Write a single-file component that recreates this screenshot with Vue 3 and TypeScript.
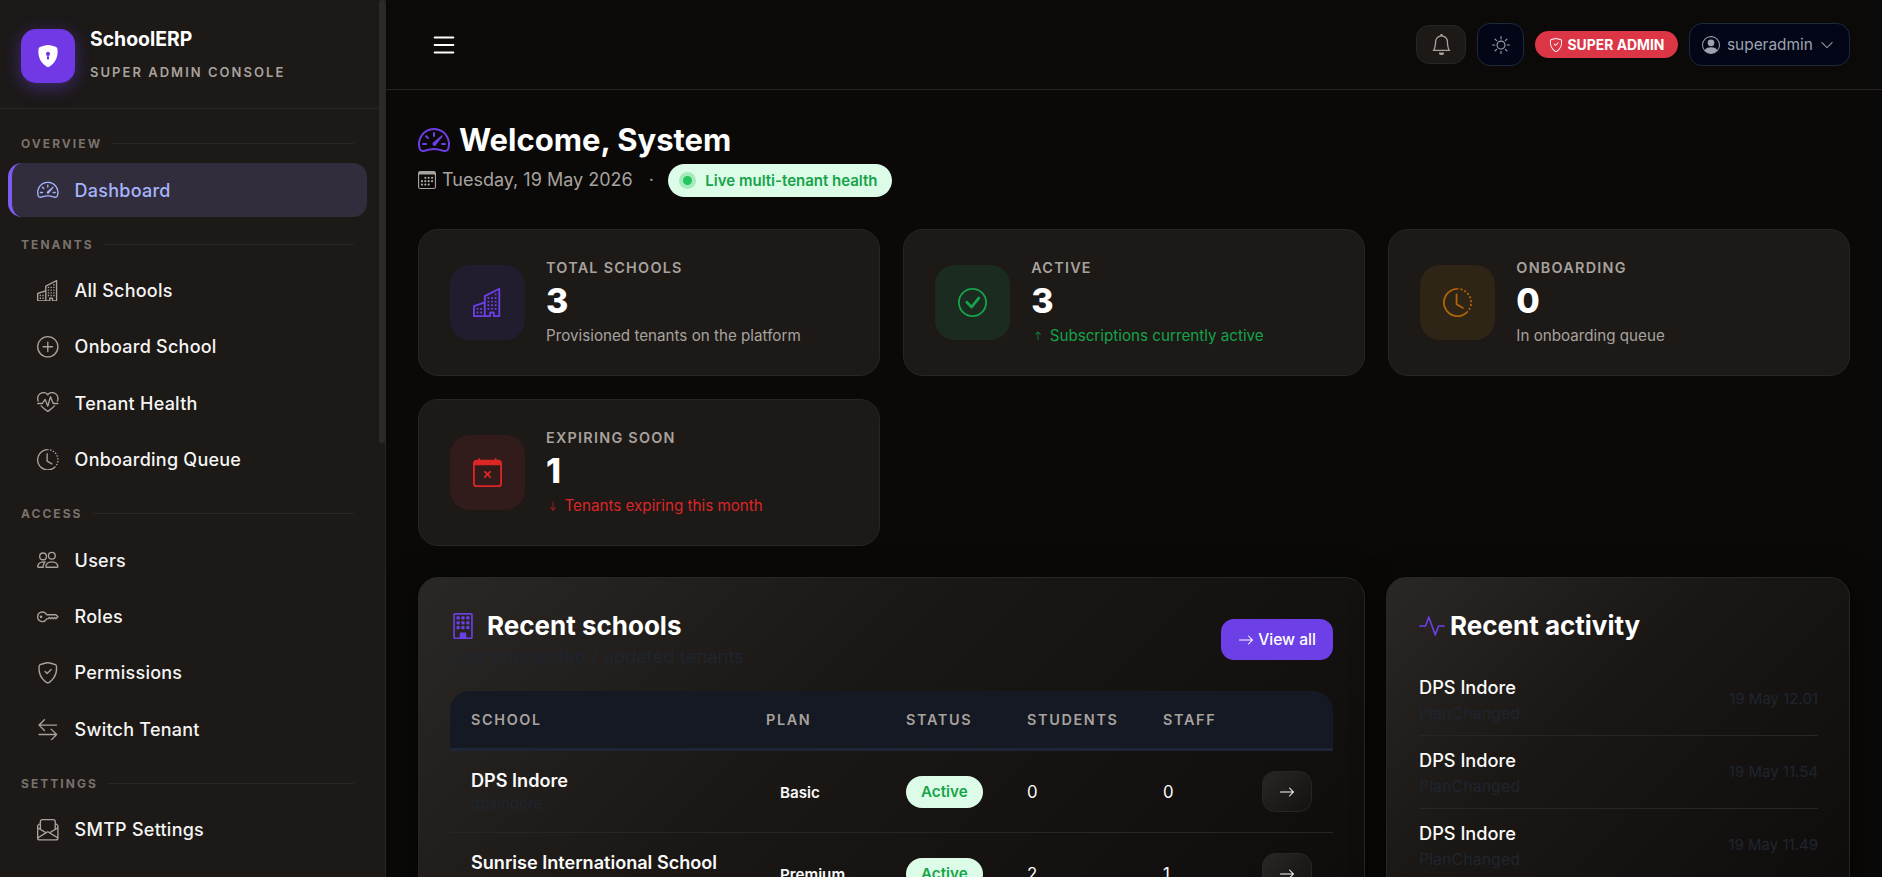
<script setup lang="ts">
import { h } from 'vue'

const icons: Record<string, string[]> = {
  speedometer: [
    'M8 4a.5.5 0 0 1 .5.5V6a.5.5 0 0 1-1 0V4.5A.5.5 0 0 1 8 4M3.732 5.732a.5.5 0 0 1 .707 0l.915.914a.5.5 0 1 1-.708.708l-.914-.915a.5.5 0 0 1 0-.707M2 10a.5.5 0 0 1 .5-.5h1.586a.5.5 0 0 1 0 1H2.5A.5.5 0 0 1 2 10m9.5 0a.5.5 0 0 1 .5-.5h1.5a.5.5 0 0 1 0 1H12a.5.5 0 0 1-.5-.5m.754-4.246a.39.39 0 0 0-.527-.02L7.547 9.31a.91.91 0 1 0 1.302 1.258l3.434-4.297a.39.39 0 0 0-.029-.518z',
    'M0 10a8 8 0 1 1 15.547 2.661c-.442 1.253-1.845 1.602-2.932 1.25C11.309 13.488 9.475 13 8 13c-1.474 0-3.31.488-4.615.911-1.087.352-2.49.003-2.932-1.25A8 8 0 0 1 0 10m8-7a7 7 0 0 0-6.603 9.329c.203.575.923.876 1.68.63C4.397 12.533 6.358 12 8 12s3.604.532 4.923.96c.757.245 1.477-.056 1.68-.631A7 7 0 0 0 8 3'
  ],
  buildings: [
    'M14.763.075A.5.5 0 0 1 15 .5v15a.5.5 0 0 1-.5.5h-3a.5.5 0 0 1-.5-.5V14h-1v1.5a.5.5 0 0 1-.5.5h-9a.5.5 0 0 1-.5-.5V10a.5.5 0 0 1 .342-.474L6 7.64V4.5a.5.5 0 0 1 .276-.447l8-4a.5.5 0 0 1 .487.022M6 8.694 1 10.36V15h5zM7 15h2v-1.5a.5.5 0 0 1 .5-.5h2a.5.5 0 0 1 .5.5V15h2V1.309l-7 3.5z',
    'M2 11h1v1H2zm2 0h1v1H4zm-2 2h1v1H2zm2 0h1v1H4zm4-4h1v1H8zm2 0h1v1h-1zm-2 2h1v1H8zm2 0h1v1h-1zm2-2h1v1h-1zm0 2h1v1h-1zM8 7h1v1H8zm2 0h1v1h-1zm2 0h1v1h-1zM8 5h1v1H8zm2 0h1v1h-1zm2 0h1v1h-1zm0-2h1v1h-1z'
  ],
  plus: [
    'M8 15A7 7 0 1 1 8 1a7 7 0 0 1 0 14m0 1A8 8 0 1 0 8 0a8 8 0 0 0 0 16',
    'M8 4a.5.5 0 0 1 .5.5v3h3a.5.5 0 0 1 0 1h-3v3a.5.5 0 0 1-1 0v-3h-3a.5.5 0 0 1 0-1h3v-3A.5.5 0 0 1 8 4'
  ],
  heart: [
    'm8 2.748-.717-.737C5.6.281 2.514.878 1.4 3.053.918 3.995.78 5.323 1.508 7H.43c-2.128-5.697 4.165-8.83 7.394-5.857q.09.083.176.171a3 3 0 0 1 .176-.17c3.23-2.974 9.522.159 7.394 5.856h-1.078c.728-1.677.59-3.005.108-3.947C13.486.878 10.4.28 8.717 2.01zM2.212 10h1.315C4.593 11.183 6.05 12.458 8 13.795c1.949-1.337 3.407-2.612 4.473-3.795h1.315c-1.265 1.566-3.14 3.25-5.788 5-2.648-1.75-4.523-3.434-5.788-5',
    'M10.464 3.314a.5.5 0 0 0-.945.049L7.921 8.956 6.464 5.314a.5.5 0 0 0-.88-.091L3.732 8H.5a.5.5 0 0 0 0 1H4a.5.5 0 0 0 .416-.223l1.473-2.209 1.647 4.118a.5.5 0 0 0 .945-.049l1.598-5.593 1.457 3.642A.5.5 0 0 0 12 9h3.5a.5.5 0 0 0 0-1h-3.162z'
  ],
  clock: [
    'M8.515 1.019A7 7 0 0 0 8 1V0a8 8 0 0 1 .589.022zm2.004.45a7 7 0 0 0-.985-.299l.219-.976q.576.129 1.126.342zm1.37.71a7 7 0 0 0-.439-.27l.493-.87a8 8 0 0 1 .979.654l-.615.789a7 7 0 0 0-.418-.302zm1.834 1.79a7 7 0 0 0-.653-.796l.724-.69q.406.429.747.91zm.744 1.352a7 7 0 0 0-.214-.468l.893-.45a8 8 0 0 1 .45 1.088l-.95.313a7 7 0 0 0-.179-.483m.53 2.507a7 7 0 0 0-.1-1.025l.985-.17q.1.58.116 1.17zm-.131 1.538q.05-.254.081-.51l.993.123a8 8 0 0 1-.23 1.155l-.964-.267q.069-.247.12-.501m-.952 2.379q.276-.436.486-.908l.914.405q-.24.54-.555 1.038zm-.964 1.205q.183-.183.35-.378l.758.653a8 8 0 0 1-.401.432z',
    'M8 1a7 7 0 1 0 4.95 11.95l.707.707A8.001 8.001 0 1 1 8 0z',
    'M7.5 3a.5.5 0 0 1 .5.5v5.21l3.248 1.856a.5.5 0 0 1-.496.868l-3.5-2A.5.5 0 0 1 7 9V3.5a.5.5 0 0 1 .5-.5'
  ],
  people: [
    'M15 14s1 0 1-1-1-4-5-4-5 3-5 4 1 1 1 1zm-7.978-1L7 12.996c.001-.264.167-1.03.76-1.72C8.312 10.629 9.282 10 11 10c1.717 0 2.687.63 3.24 1.276.593.69.758 1.457.76 1.72l-.008.002-.014.002zM11 7a2 2 0 1 0 0-4 2 2 0 0 0 0 4m3-2a3 3 0 1 1-6 0 3 3 0 0 1 6 0M6.936 9.28a6 6 0 0 0-1.23-.247A7 7 0 0 0 5 9c-4 0-5 3-5 4q0 1 1 1h4.216A2.24 2.24 0 0 1 5 13c0-1.01.377-2.042 1.09-2.904.243-.294.526-.569.846-.816M4.92 10A5.5 5.5 0 0 0 4 13H1c0-.26.164-1.03.76-1.724.545-.636 1.492-1.256 3.16-1.275ZM1.5 5.5a3 3 0 1 1 6 0 3 3 0 0 1-6 0m3-2a2 2 0 1 0 0 4 2 2 0 0 0 0-4'
  ],
  key: [
    'M0 8a4 4 0 0 1 7.465-2H14a.5.5 0 0 1 .354.146l1.5 1.5a.5.5 0 0 1 0 .708l-1.5 1.5a.5.5 0 0 1-.708 0L13 9.207l-.646.647a.5.5 0 0 1-.708 0L11 9.207l-.646.647a.5.5 0 0 1-.708 0L9 9.207l-.646.647A.5.5 0 0 1 8 10h-.535A4 4 0 0 1 0 8m4-3a3 3 0 1 0 2.712 4.285A.5.5 0 0 1 7.163 9h.63l.853-.854a.5.5 0 0 1 .708 0l.646.647.646-.647a.5.5 0 0 1 .708 0l.646.647.646-.647a.5.5 0 0 1 .708 0l.646.647.793-.793-1-1H7.163a.5.5 0 0 1-.451-.285A3 3 0 0 0 4 5',
    'M4 8a1 1 0 1 1-2 0 1 1 0 0 1 2 0'
  ],
  shieldCheck: [
    'M5.338 1.59a61 61 0 0 0-2.837.856.48.48 0 0 0-.328.39c-.554 4.157.726 7.19 2.253 9.188a10.7 10.7 0 0 0 2.287 2.233c.346.244.652.42.893.533q.18.085.293.118a1 1 0 0 0 .101.025 1 1 0 0 0 .1-.025q.114-.034.294-.118c.24-.113.547-.29.893-.533a10.7 10.7 0 0 0 2.287-2.233c1.527-1.997 2.807-5.031 2.253-9.188a.48.48 0 0 0-.328-.39c-.651-.213-1.75-.56-2.837-.855C9.552 1.29 8.531 1.067 8 1.067c-.53 0-1.552.223-2.662.524zM5.072.56C6.157.265 7.31 0 8 0s1.843.265 2.928.56c1.11.3 2.229.655 2.887.87a1.54 1.54 0 0 1 1.044 1.262c.596 4.477-.787 7.795-2.465 9.99a11.8 11.8 0 0 1-2.517 2.453 7 7 0 0 1-1.048.625c-.28.132-.581.24-.829.24s-.548-.108-.829-.24a7 7 0 0 1-1.048-.625 11.8 11.8 0 0 1-2.517-2.453C1.928 10.487.545 7.169 1.141 2.692A1.54 1.54 0 0 1 2.185 1.43 63 63 0 0 1 5.072.56',
    'M10.854 5.146a.5.5 0 0 1 0 .708l-3 3a.5.5 0 0 1-.708 0l-1.5-1.5a.5.5 0 1 1 .708-.708L7.5 7.793l2.646-2.647a.5.5 0 0 1 .708 0'
  ],
  swap: [
    'M1 11.5a.5.5 0 0 0 .5.5h11.793l-3.147 3.146a.5.5 0 0 0 .708.708l4-4a.5.5 0 0 0 0-.708l-4-4a.5.5 0 0 0-.708.708L13.293 11H1.5a.5.5 0 0 0-.5.5m14-7a.5.5 0 0 1-.5.5H2.707l3.147 3.146a.5.5 0 1 1-.708.708l-4-4a.5.5 0 0 1 0-.708l4-4a.5.5 0 1 1 .708.708L2.707 4H14.5a.5.5 0 0 1 .5.5'
  ],
  envelope: [
    'M4 0a2 2 0 0 0-2 2v1.133l-.941.502A2 2 0 0 0 0 5.4V14a2 2 0 0 0 2 2h12a2 2 0 0 0 2-2V5.4a2 2 0 0 0-1.059-1.765L14 3.133V2a2 2 0 0 0-2-2zm10 4.267.47.25A1 1 0 0 1 15 5.4v.817l-1 .6zm-1 3.15-3.75 2.25L8 8.917l-1.25.75L3 7.417V2a1 1 0 0 1 1-1h8a1 1 0 0 1 1 1zm-11-.6-1-.6V5.4a1 1 0 0 1 .53-.882L2 4.267zm13 .566v5.734l-4.778-2.867zm-.035 6.88A1 1 0 0 1 14 15H2a1 1 0 0 1-.965-.738L8 10.083zM1 13.116V7.383l4.778 2.867L1 13.117Z'
  ],
  bell: [
    'M8 16a2 2 0 0 0 2-2H6a2 2 0 0 0 2 2M8 1.918l-.797.161A4 4 0 0 0 4 6c0 .628-.134 2.197-.459 3.742-.16.767-.376 1.566-.663 2.258h10.244c-.287-.692-.502-1.49-.663-2.258C12.134 8.197 12 6.628 12 6a4 4 0 0 0-3.203-3.92zM14.22 12c.223.447.481.801.78 1H1c.299-.199.557-.553.78-1C2.68 10.2 3 6.88 3 6c0-2.42 1.72-4.44 4.005-4.901a1 1 0 1 1 1.99 0A5 5 0 0 1 13 6c0 .88.32 4.2 1.22 6'
  ],
  sun: [
    'M8 11a3 3 0 1 1 0-6 3 3 0 0 1 0 6m0 1a4 4 0 1 0 0-8 4 4 0 0 0 0 8M8 0a.5.5 0 0 1 .5.5v2a.5.5 0 0 1-1 0v-2A.5.5 0 0 1 8 0m0 13a.5.5 0 0 1 .5.5v2a.5.5 0 0 1-1 0v-2A.5.5 0 0 1 8 13m8-5a.5.5 0 0 1-.5.5h-2a.5.5 0 0 1 0-1h2a.5.5 0 0 1 .5.5M3 8a.5.5 0 0 1-.5.5h-2a.5.5 0 0 1 0-1h2A.5.5 0 0 1 3 8m10.657-5.657a.5.5 0 0 1 0 .707l-1.414 1.415a.5.5 0 1 1-.707-.708l1.414-1.414a.5.5 0 0 1 .707 0m-9.193 9.193a.5.5 0 0 1 0 .707L3.05 13.657a.5.5 0 0 1-.707-.707l1.414-1.414a.5.5 0 0 1 .707 0m9.193 2.121a.5.5 0 0 1-.707 0l-1.414-1.414a.5.5 0 0 1 .707-.707l1.414 1.414a.5.5 0 0 1 0 .707M4.464 4.465a.5.5 0 0 1-.707 0L2.343 3.05a.5.5 0 1 1 .707-.707l1.414 1.414a.5.5 0 0 1 0 .708'
  ],
  person: [
    'M11 6a3 3 0 1 1-6 0 3 3 0 0 1 6 0',
    'M0 8a8 8 0 1 1 16 0A8 8 0 0 1 0 8m8-7a7 7 0 0 0-5.468 11.37C3.242 11.226 4.805 10 8 10s4.757 1.225 5.468 2.37A7 7 0 0 0 8 1'
  ],
  chevron: [
    'M1.646 4.646a.5.5 0 0 1 .708 0L8 10.293l5.646-5.647a.5.5 0 0 1 .708.708l-6 6a.5.5 0 0 1-.708 0l-6-6a.5.5 0 0 1 0-.708'
  ],
  calendar: [
    'M14 0H2a2 2 0 0 0-2 2v12a2 2 0 0 0 2 2h12a2 2 0 0 0 2-2V2a2 2 0 0 0-2-2M1 3.857C1 3.384 1.448 3 2 3h12c.552 0 1 .384 1 .857v10.286c0 .473-.448.857-1 .857H2c-.552 0-1-.384-1-.857z',
    'M6.5 7a1 1 0 1 0 0-2 1 1 0 0 0 0 2m3 0a1 1 0 1 0 0-2 1 1 0 0 0 0 2m3 0a1 1 0 1 0 0-2 1 1 0 0 0 0 2m-9 3a1 1 0 1 0 0-2 1 1 0 0 0 0 2m3 0a1 1 0 1 0 0-2 1 1 0 0 0 0 2m3 0a1 1 0 1 0 0-2 1 1 0 0 0 0 2m3 0a1 1 0 1 0 0-2 1 1 0 0 0 0 2m-9 3a1 1 0 1 0 0-2 1 1 0 0 0 0 2m3 0a1 1 0 1 0 0-2 1 1 0 0 0 0 2m3 0a1 1 0 1 0 0-2 1 1 0 0 0 0 2'
  ],
  check: [
    'M8 15A7 7 0 1 1 8 1a7 7 0 0 1 0 14m0 1A8 8 0 1 0 8 0a8 8 0 0 0 0 16',
    'm10.97 4.97-.02.022-3.473 4.425-2.093-2.094a.75.75 0 0 0-1.06 1.06L6.97 11.03a.75.75 0 0 0 1.079-.02l3.992-4.99a.75.75 0 0 0-1.071-1.05'
  ],
  calendarX: [
    'M6.146 7.146a.5.5 0 0 1 .708 0L8 8.293l1.146-1.147a.5.5 0 1 1 .708.708L8.707 9l1.147 1.146a.5.5 0 0 1-.708.708L8 9.707l-1.146 1.147a.5.5 0 0 1-.708-.708L7.293 9 6.146 7.854a.5.5 0 0 1 0-.708',
    'M3.5 0a.5.5 0 0 1 .5.5V1h8V.5a.5.5 0 0 1 1 0V1h1a2 2 0 0 1 2 2v11a2 2 0 0 1-2 2H2a2 2 0 0 1-2-2V3a2 2 0 0 1 2-2h1V.5a.5.5 0 0 1 .5-.5M1 4v10a1 1 0 0 0 1 1h12a1 1 0 0 0 1-1V4z'
  ],
  building: [
    'M4 2.5a.5.5 0 0 1 .5-.5h1a.5.5 0 0 1 .5.5v1a.5.5 0 0 1-.5.5h-1a.5.5 0 0 1-.5-.5zm3 0a.5.5 0 0 1 .5-.5h1a.5.5 0 0 1 .5.5v1a.5.5 0 0 1-.5.5h-1a.5.5 0 0 1-.5-.5zm3.5-.5a.5.5 0 0 0-.5.5v1a.5.5 0 0 0 .5.5h1a.5.5 0 0 0 .5-.5v-1a.5.5 0 0 0-.5-.5zM4 5.5a.5.5 0 0 1 .5-.5h1a.5.5 0 0 1 .5.5v1a.5.5 0 0 1-.5.5h-1a.5.5 0 0 1-.5-.5zM7.5 5a.5.5 0 0 0-.5.5v1a.5.5 0 0 0 .5.5h1a.5.5 0 0 0 .5-.5v-1a.5.5 0 0 0-.5-.5zm2.5.5a.5.5 0 0 1 .5-.5h1a.5.5 0 0 1 .5.5v1a.5.5 0 0 1-.5.5h-1a.5.5 0 0 1-.5-.5zM4.5 8a.5.5 0 0 0-.5.5v1a.5.5 0 0 0 .5.5h1a.5.5 0 0 0 .5-.5v-1a.5.5 0 0 0-.5-.5zm2.5.5a.5.5 0 0 1 .5-.5h1a.5.5 0 0 1 .5.5v1a.5.5 0 0 1-.5.5h-1a.5.5 0 0 1-.5-.5zm3.5-.5a.5.5 0 0 0-.5.5v1a.5.5 0 0 0 .5.5h1a.5.5 0 0 0 .5-.5v-1a.5.5 0 0 0-.5-.5z',
    'M2 1a1 1 0 0 1 1-1h10a1 1 0 0 1 1 1v14a1 1 0 0 1-1 1H3a1 1 0 0 1-1-1zm11 0H3v14h3v-2.5a.5.5 0 0 1 .5-.5h3a.5.5 0 0 1 .5.5V15h3z'
  ],
  activity: [
    'M6 2a.5.5 0 0 1 .47.33L10 12.036l1.53-4.208A.5.5 0 0 1 12 7.5h3.5a.5.5 0 0 1 0 1h-3.15l-1.88 5.17a.5.5 0 0 1-.94 0L6 3.964 4.47 8.171A.5.5 0 0 1 4 8.5H.5a.5.5 0 0 1 0-1h3.15l1.88-5.17A.5.5 0 0 1 6 2'
  ],
  arrowRight: [
    'M1 8a.5.5 0 0 1 .5-.5h11.793l-3.147-3.146a.5.5 0 0 1 .708-.708l4 4a.5.5 0 0 1 0 .708l-4 4a.5.5 0 0 1-.708-.708L13.293 8.5H1.5A.5.5 0 0 1 1 8'
  ],
  arrowUp: [
    'M8 15a.5.5 0 0 0 .5-.5V2.707l3.146 3.147a.5.5 0 0 0 .708-.708l-4-4a.5.5 0 0 0-.708 0l-4 4a.5.5 0 1 0 .708.708L7.5 2.707V14.5a.5.5 0 0 0 .5.5'
  ],
  arrowDown: [
    'M8 1a.5.5 0 0 1 .5.5v11.793l3.146-3.147a.5.5 0 0 1 .708.708l-4 4a.5.5 0 0 1-.708 0l-4-4a.5.5 0 0 1 .708-.708L7.5 13.293V1.5A.5.5 0 0 1 8 1'
  ],
  list: [
    'M2.5 12a.5.5 0 0 1 .5-.5h10a.5.5 0 0 1 0 1H3a.5.5 0 0 1-.5-.5m0-4a.5.5 0 0 1 .5-.5h10a.5.5 0 0 1 0 1H3a.5.5 0 0 1-.5-.5m0-4a.5.5 0 0 1 .5-.5h10a.5.5 0 0 1 0 1H3a.5.5 0 0 1-.5-.5'
  ],
  shieldLock: [
    'M8 0c-.69 0-1.843.265-2.928.56-1.11.3-2.229.655-2.887.87a1.54 1.54 0 0 0-1.044 1.262c-.596 4.477.787 7.795 2.465 9.99a11.8 11.8 0 0 0 2.517 2.453c.386.273.744.482 1.048.625.28.132.581.24.829.24s.548-.108.829-.24a7 7 0 0 0 1.048-.625 11.8 11.8 0 0 0 2.517-2.453c1.678-2.195 3.061-5.513 2.465-9.99a1.54 1.54 0 0 0-1.044-1.263 63 63 0 0 0-2.887-.87C9.843.266 8.69 0 8 0m0 5a1.5 1.5 0 0 1 .5 2.915l.385 1.99a.5.5 0 0 1-.491.595h-.788a.5.5 0 0 1-.49-.595l.384-1.99A1.5 1.5 0 0 1 8 5'
  ]
}

const Bi = (props: { name: string }) =>
  h(
    'svg',
    { viewBox: '0 0 16 16', fill: 'currentColor', 'aria-hidden': 'true' },
    icons[props.name].map((d) => h('path', { d, 'fill-rule': 'evenodd' }))
  )
Bi.props = ['name']

const nav = [
  { label: 'OVERVIEW', items: [{ icon: 'speedometer', text: 'Dashboard', active: true }] },
  {
    label: 'TENANTS',
    items: [
      { icon: 'buildings', text: 'All Schools' },
      { icon: 'plus', text: 'Onboard School' },
      { icon: 'heart', text: 'Tenant Health' },
      { icon: 'clock', text: 'Onboarding Queue' }
    ]
  },
  {
    label: 'ACCESS',
    items: [
      { icon: 'people', text: 'Users' },
      { icon: 'key', text: 'Roles' },
      { icon: 'shieldCheck', text: 'Permissions' },
      { icon: 'swap', text: 'Switch Tenant' }
    ]
  },
  { label: 'SETTINGS', items: [{ icon: 'envelope', text: 'SMTP Settings' }] }
]

const stats = [
  { tone: 'purple', icon: 'buildings', label: 'TOTAL SCHOOLS', value: '3', note: 'Provisioned tenants on the platform', noteTone: '', arrow: '' },
  { tone: 'green', icon: 'check', label: 'ACTIVE', value: '3', note: 'Subscriptions currently active', noteTone: 'up', arrow: 'arrowUp' },
  { tone: 'amber', icon: 'clock', label: 'ONBOARDING', value: '0', note: 'In onboarding queue', noteTone: '', arrow: '' },
  { tone: 'red', icon: 'calendarX', label: 'EXPIRING SOON', value: '1', note: 'Tenants expiring this month', noteTone: 'down', arrow: 'arrowDown' }
]

const schools = [
  { name: 'DPS Indore', slug: 'dpsindore', plan: 'Basic', students: 0, staff: 0 },
  { name: 'Sunrise International School', slug: 'sunrise', plan: 'Premium', students: 2, staff: 1 }
]

const activity = [
  { name: 'DPS Indore', type: 'PlanChanged', time: '19 May 12.01' },
  { name: 'DPS Indore', type: 'PlanChanged', time: '19 May 11.54' },
  { name: 'DPS Indore', type: 'PlanChanged', time: '19 May 11.49' }
]
</script>

<template>
  <div class="app">
    <aside class="sidebar">
      <div class="brand">
        <div class="logo"><Bi name="shieldLock" /></div>
        <div>
          <div class="brand-name">SchoolERP</div>
          <div class="brand-sub">SUPER ADMIN CONSOLE</div>
        </div>
      </div>
      <nav class="nav">
        <template v-for="group in nav" :key="group.label">
          <div class="nav-label"><span>{{ group.label }}</span><i></i></div>
          <a
            v-for="item in group.items"
            :key="item.text"
            class="nav-item"
            :class="{ active: item.active }"
          >
            <Bi :name="item.icon" class="nav-icon" />
            <span>{{ item.text }}</span>
          </a>
        </template>
      </nav>
      <div class="thumb"></div>
    </aside>

    <div class="main">
      <header class="topbar">
        <button class="menu"><Bi name="list" /></button>
        <div class="top-actions">
          <button class="bell"><Bi name="bell" /></button>
          <button class="theme"><Bi name="sun" /></button>
          <span class="role"><Bi name="shieldCheck" />SUPER ADMIN</span>
          <button class="user">
            <Bi name="person" class="user-icon" />
            <span>superadmin</span>
            <Bi name="chevron" class="user-chev" />
          </button>
        </div>
      </header>

      <main class="content">
        <h1 class="title"><Bi name="speedometer" />Welcome, System</h1>
        <div class="subtitle">
          <Bi name="calendar" class="date-icon" />
          <span class="date">Tuesday, 19 May 2026</span>
          <span class="sep">·</span>
          <span class="live"><i class="live-dot"></i>Live multi-tenant health</span>
        </div>

        <section class="stats">
          <article v-for="s in stats" :key="s.label" class="stat">
            <div class="stat-icon" :class="s.tone"><Bi :name="s.icon" /></div>
            <div class="stat-body">
              <div class="stat-label">{{ s.label }}</div>
              <div class="stat-value">{{ s.value }}</div>
              <div class="stat-note" :class="s.noteTone">
                <Bi v-if="s.arrow" :name="s.arrow" class="note-arrow" />{{ s.note }}
              </div>
            </div>
          </article>
        </section>

        <section class="panels">
          <article class="panel">
            <div class="panel-head">
              <div>
                <h2 class="panel-title"><Bi name="building" class="school-icon" />Recent schools</h2>
                <p class="faint panel-sub">Last onboarded / updated tenants</p>
              </div>
              <button class="view-all"><Bi name="arrowRight" />View all</button>
            </div>
            <table class="table">
              <colgroup>
                <col class="c1" /><col class="c2" /><col class="c3" /><col class="c4" /><col class="c5" /><col />
              </colgroup>
              <thead>
                <tr>
                  <th>SCHOOL</th><th>PLAN</th><th>STATUS</th><th>STUDENTS</th><th>STAFF</th><th></th>
                </tr>
              </thead>
              <tbody>
                <tr v-for="row in schools" :key="row.name">
                  <td>
                    <div class="school-name">{{ row.name }}</div>
                    <div class="faint school-slug">{{ row.slug }}</div>
                  </td>
                  <td><span class="plan">{{ row.plan }}</span></td>
                  <td><span class="status">Active</span></td>
                  <td>{{ row.students }}</td>
                  <td>{{ row.staff }}</td>
                  <td><button class="go"><Bi name="arrowRight" /></button></td>
                </tr>
              </tbody>
            </table>
          </article>

          <article class="panel side">
            <h2 class="panel-title"><Bi name="activity" class="activity-icon" />Recent activity</h2>
            <ul class="feed">
              <li v-for="a in activity" :key="a.time">
                <div>
                  <div class="feed-name">{{ a.name }}</div>
                  <div class="faint feed-type">{{ a.type }}</div>
                </div>
                <div class="faint feed-time">{{ a.time }}</div>
              </li>
            </ul>
          </article>
        </section>
      </main>
    </div>
  </div>
</template>

<style>
html, body { margin: 0; background: #0a0908; }
</style>

<style scoped>
.app {
  display: flex;
  height: 100vh;
  overflow: hidden;
  background: #0a0908;
  font-family: Inter, "Liberation Sans", sans-serif;
  color: #fafaf9;
}
button { font-family: inherit; padding: 0; cursor: pointer; }
svg { display: block; flex-shrink: 0; }

.sidebar {
  position: relative;
  flex: 0 0 386px;
  box-sizing: border-box;
  height: 100%;
  overflow: hidden;
  background: #1c1917;
  border-right: 1px solid #292524;
}
.thumb {
  position: absolute;
  top: 0;
  right: 0;
  width: 6px;
  height: 443px;
  border-radius: 3px;
  background: #2c2926;
}
.brand {
  box-sizing: border-box;
  height: 109px;
  display: flex;
  align-items: center;
  gap: 15px;
  padding: 3px 21px 0;
  border-bottom: 1px solid #292524;
}
.logo {
  width: 54px;
  height: 54px;
  border-radius: 15px;
  background: #7139e6;
  box-shadow: 0 4px 18px rgba(109, 63, 230, 0.45);
  display: flex;
  align-items: center;
  justify-content: center;
  color: #fff;
}
.logo svg { width: 22px; height: 22px; }
.brand-name { font-size: 19.4px; font-weight: 700; line-height: 24px; color: #fff; margin-top: -5px; }
.brand-sub {
  margin-top: 13px;
  font-size: 13px;
  font-weight: 600;
  line-height: 16px;
  letter-spacing: 2.03px;
  color: #a8a29e;
}
.nav { padding: 0 18px 0 8px; }
.nav-label {
  display: flex;
  align-items: center;
  gap: 10px;
  height: 16px;
  margin: 19.2px 0 11.3px;
  padding: 0 13px 0 13px;
  font-size: 12px;
  font-weight: 700;
  letter-spacing: 2.05px;
  color: #78716c;
}
.nav-label:first-child { margin-top: 26px; margin-bottom: 12px; }
.nav-label i { flex: 1; height: 1px; background: #292524; }
.nav-item {
  box-sizing: border-box;
  height: 54px;
  margin-bottom: 2.4px;
  padding-left: 29px;
  display: flex;
  align-items: center;
  gap: 16px;
  font-size: 18px;
  font-weight: 450;
  letter-spacing: 0.24px;
  color: #f5f5f4;
  border-radius: 14px;
}
.nav-icon { width: 21.6px; height: 21.6px; color: #a8a29e; }
.nav-item.active {
  margin-bottom: 1.2px;
  padding-left: 25px;
  border-left: 4px solid #7d5cf0;
  background: #322d3c;
  color: #a5b4fc;
  font-weight: 500;
}
.nav-item.active .nav-icon { color: #a5b4fc; }

.main { flex: 1; min-width: 0; display: flex; flex-direction: column; height: 100%; }
.topbar {
  box-sizing: border-box;
  flex: 0 0 90px;
  display: flex;
  align-items: center;
  justify-content: space-between;
  padding: 0 32px;
  background: #0c0a09;
  border-bottom: 1px solid #292524;
}
.menu {
  width: 52px;
  height: 42px;
  background: none;
  border: 0;
  color: #fff;
  display: flex;
  align-items: center;
  justify-content: center;
}
.menu svg { width: 30px; height: 30px; }
.top-actions { display: flex; align-items: center; gap: 11px; }
.bell {
  box-sizing: border-box;
  width: 50px;
  height: 39px;
  border-radius: 13px;
  background: #1c1917;
  border: 1px solid #292524;
  color: #a8a29e;
  display: flex;
  align-items: center;
  justify-content: center;
}
.bell svg { width: 21px; height: 21px; }
.theme {
  box-sizing: border-box;
  width: 47px;
  height: 43px;
  border-radius: 13px;
  background: #020617;
  border: 1px solid #1e293b;
  color: #9ca3af;
  display: flex;
  align-items: center;
  justify-content: center;
}
.theme svg { width: 18px; height: 18px; }
.role {
  box-sizing: border-box;
  width: 143px;
  height: 27px;
  border-radius: 14px;
  background: #dc3545;
  color: #fff;
  font-size: 13.9px;
  font-weight: 700;
  display: flex;
  align-items: center;
  justify-content: center;
  gap: 5px;
}
.role svg { width: 14px; height: 14px; }
.user {
  box-sizing: border-box;
  width: 161px;
  height: 43px;
  border-radius: 13px;
  background: #020617;
  border: 1px solid #1e293b;
  color: #9ca3af;
  font-size: 15.4px;
  display: flex;
  align-items: center;
  padding-left: 12px;
  gap: 7px;
}
.user-icon { width: 18px; height: 18px; }
.user-chev { width: 14px; height: 14px; }

.content { padding: 32px; flex: 1; min-height: 0; }
.title {
  margin: 0;
  display: flex;
  align-items: center;
  gap: 9px;
  height: 36px;
  font-size: 31px;
  line-height: 38px;
  font-weight: 700;
  color: #fff;
}
.title svg { width: 32px; height: 32px; color: #6d3fe6; }
.subtitle {
  margin-top: 6px;
  height: 33px;
  display: flex;
  align-items: center;
  font-size: 18px;
  color: #a8a29e;
}
.date-icon { width: 18px; height: 18px; margin-right: 6px; margin-top: -2px; }
.date { margin-top: -2px; }
.sep { margin: 0 14.5px 0 16px; margin-top: -2px; }
.live {
  box-sizing: border-box;
  height: 33px;
  display: flex;
  align-items: center;
  padding: 0 14px 0 10px;
  border-radius: 17px;
  background: #dcfce7;
  color: #16a34a;
  font-size: 15px;
  font-weight: 600;
}
.live-dot {
  width: 9px;
  height: 9px;
  margin: 0 13px 0 5px;
  border-radius: 50%;
  background: #22c55e;
  box-shadow: 0 0 0 4px rgba(34, 197, 94, 0.3);
}

.stats {
  margin-top: 32px;
  display: grid;
  grid-template-columns: repeat(3, 1fr);
  gap: 23px 23.5px;
}
.stat {
  box-sizing: border-box;
  height: 147px;
  padding: 0 31px;
  display: flex;
  align-items: center;
  gap: 21px;
  background: #1c1917;
  border: 1px solid #292524;
  border-radius: 20px;
}
.stat-body { padding-top: 4.8px; }
.stat-icon {
  width: 75px;
  height: 75px;
  border-radius: 20px;
  display: flex;
  align-items: center;
  justify-content: center;
}
.stat-icon svg { width: 29px; height: 29px; }
.stat-icon.purple { background: #221d2e; color: #6d3fe6; }
.stat-icon.green { background: #1c2b20; color: #16a34a; }
.stat-icon.amber { background: #2e2517; color: #b16307; }
.stat-icon.red { background: #311c1b; color: #dc2626; }
.stat-label { font-size: 14.4px; line-height: 18px; font-weight: 600; letter-spacing: 1.25px; color: #a8a29e; margin-top: -4px; }
.stat-value { font-size: 34px; line-height: 42px; font-weight: 800; color: #fff; margin-top: 3px; }
.stat-note { display: flex; align-items: center; gap: 6.5px; font-size: 15.2px; line-height: 20px; color: #a8a29e; margin-top: 4px; }
.stat-note.up { color: #16a34a; }
.stat-note.down { color: #dc2626; }
.note-arrow { width: 10px; height: 10px; margin-left: 2px; }

.panels {
  margin-top: 31px;
  display: grid;
  grid-template-columns: minmax(0, 1fr) 464px;
  gap: 21px;
  align-items: start;
}
.panel {
  box-sizing: border-box;
  padding: 33px 31px 32px;
  background: linear-gradient(135deg, #2a2724 0%, #1a1715 40%, #0e0c0b 100%);
  border: 1px solid #292524;
  border-radius: 20px;
  box-shadow: 0 8px 32px rgba(0, 0, 0, 0.55);
}
.panel-head { display: flex; align-items: center; justify-content: space-between; }
.panel-title {
  margin: 0;
  display: flex;
  align-items: center;
  font-size: 26px;
  line-height: 30px;
  font-weight: 700;
  color: #fff;
}
.school-icon { width: 26px; height: 26px; color: #6d3fe6; margin-right: 11px; }
.activity-icon { width: 26px; height: 26px; color: #6d3fe6; margin-right: 5px; }
.side { padding-left: 32px; padding-right: 31px; }
.faint { color: #1f2530; }
.panel-sub { margin: 3px 0 0; font-size: 18.4px; line-height: 24px; white-space: nowrap; }
.view-all {
  box-sizing: border-box;
  width: 112px;
  height: 41px;
  border: 0;
  border-radius: 13px;
  background: #6d3fe6;
  color: #fff;
  font-size: 15.6px;
  font-weight: 500;
  display: flex;
  align-items: center;
  justify-content: center;
  gap: 4px;
}
.view-all svg { width: 16px; height: 16px; }

.table {
  margin-top: 23px;
  width: 100%;
  border-collapse: separate;
  border-spacing: 0;
  table-layout: fixed;
}
.c1 { width: 295px; }
.c2 { width: 140px; }
.c3 { width: 121px; }
.c4 { width: 136px; }
.c5 { width: 99px; }
.table th {
  height: 57px;
  padding: 0 21px;
  text-align: left;
  font-size: 14.4px;
  font-weight: 600;
  letter-spacing: 1.65px;
  color: #a8a29e;
  background: #151924;
  border-bottom: 3px solid #1e2535;
}
.table th:first-child { border-top-left-radius: 20px; }
.table th:last-child { border-top-right-radius: 20px; }
.table td {
  height: 81px;
  padding: 0 21px;
  font-size: 16.8px;
  color: #fafaf9;
  border-bottom: 1px solid #292524;
  vertical-align: middle;
}
.school-name { font-size: 18.1px; line-height: 24px; font-weight: 600; white-space: nowrap; margin-top: 1px; }
.school-slug { margin-top: 0; font-size: 15px; line-height: 24px; }
.plan { padding-left: 14px; font-size: 15.2px; font-weight: 600; white-space: nowrap; }
.status {
  display: inline-block;
  padding: 0 15px;
  height: 32px;
  line-height: 32px;
  border-radius: 16px;
  background: #dcfce7;
  color: #16a34a;
  font-size: 15.2px;
  font-weight: 600;
}
.go {
  box-sizing: border-box;
  width: 50px;
  height: 41px;
  border-radius: 13px;
  border: 1px solid #292524;
  background: linear-gradient(135deg, #292624, #141210);
  color: #fff;
  display: flex;
  align-items: center;
  justify-content: center;
}
.go svg { width: 16px; height: 16px; }

.feed { list-style: none; margin: 22px 0 0; padding: 0; }
.feed li {
  box-sizing: border-box;
  height: 73px;
  padding-top: 12px;
  display: flex;
  justify-content: space-between;
  border-bottom: 1px solid #292524;
}
.feed-name { font-size: 18.2px; line-height: 24px; font-weight: 500; }
.feed-type { margin-top: 2px; font-size: 16px; line-height: 24px; }
.feed-time { margin-top: 12px; font-size: 15px; line-height: 24px; }
</style>
